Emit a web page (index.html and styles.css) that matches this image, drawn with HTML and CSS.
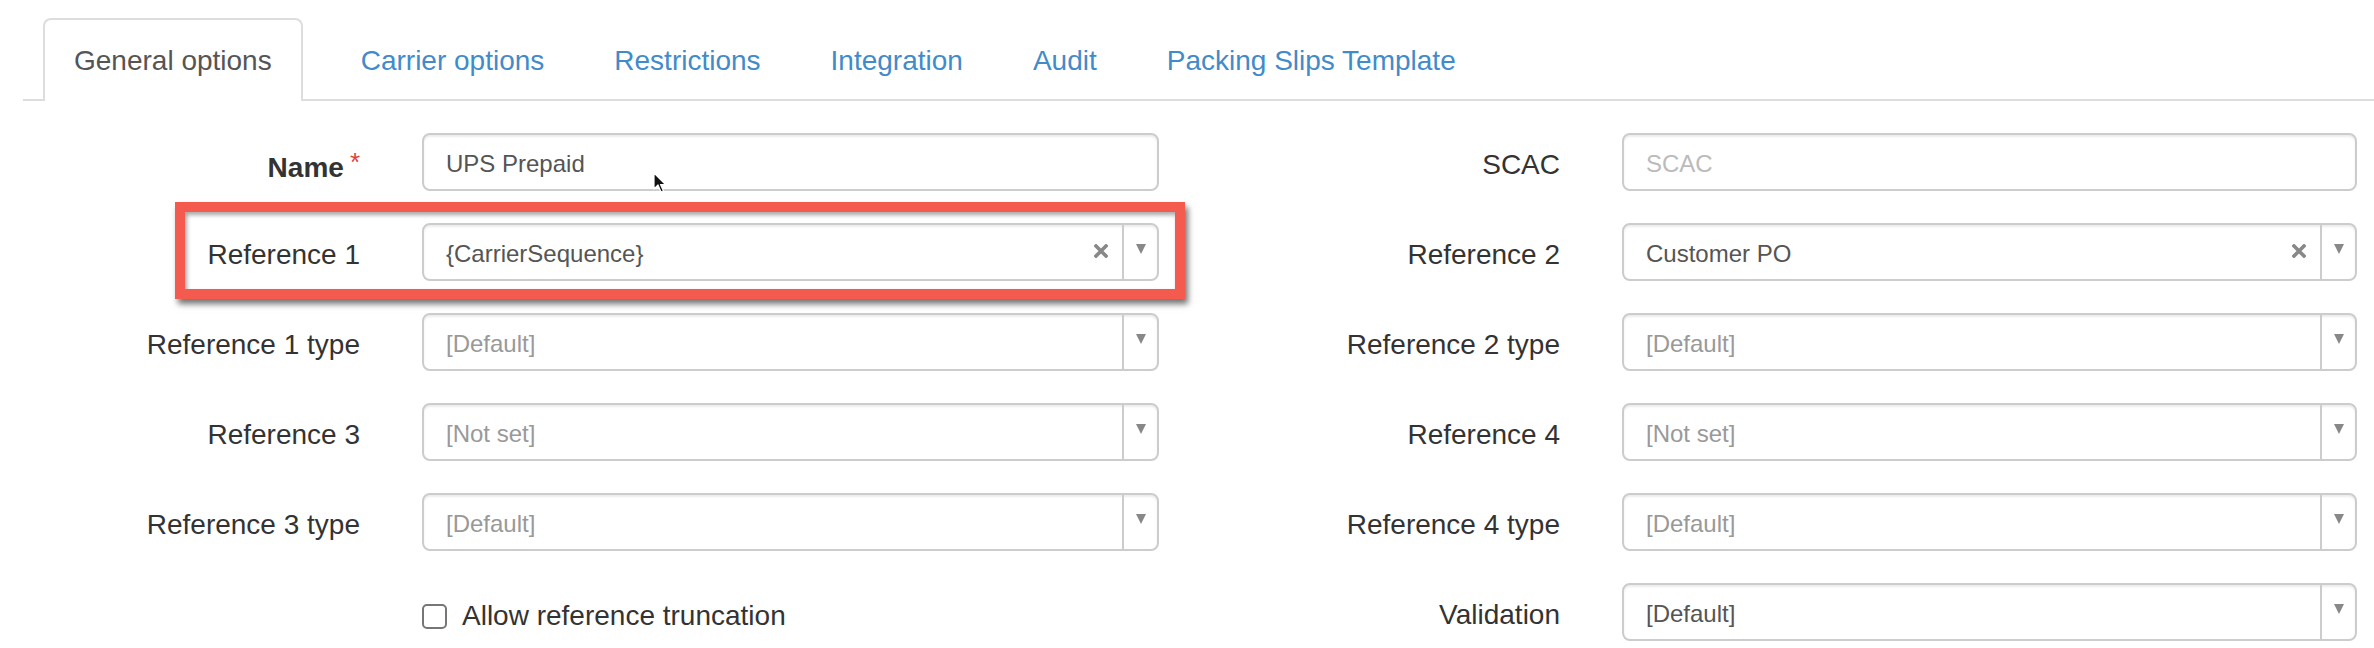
FILE: index.html
```html
<!DOCTYPE html>
<html>
<head>
<meta charset="utf-8">
<link rel="stylesheet" href="styles.css">
</head>
<body>
<div class="page">
  <ul class="tabs">
    <li class="tab active">General options</li>
    <li class="tab"><a href="#">Carrier options</a></li>
    <li class="tab"><a href="#">Restrictions</a></li>
    <li class="tab"><a href="#">Integration</a></li>
    <li class="tab"><a href="#">Audit</a></li>
    <li class="tab"><a href="#">Packing Slips Template</a></li>
  </ul>

  <div class="form">
    <label class="lbl bold">Name<span class="req">*</span></label>
    <div class="input"><span class="val">UPS Prepaid</span></div>
    <label class="lbl">SCAC</label>
    <div class="input"><span class="ph light">SCAC</span></div>

    <label class="lbl">Reference 1</label>
    <div class="select"><span class="val">{CarrierSequence}</span><span class="clear"><svg width="14" height="14" viewBox="0 0 14 14"><path d="M2 2L12 12M12 2L2 12" stroke="#888" stroke-width="3.6" stroke-linecap="square"/></svg></span><span class="arrow"><i></i></span></div>
    <label class="lbl">Reference 2</label>
    <div class="select"><span class="val">Customer PO</span><span class="clear"><svg width="14" height="14" viewBox="0 0 14 14"><path d="M2 2L12 12M12 2L2 12" stroke="#888" stroke-width="3.6" stroke-linecap="square"/></svg></span><span class="arrow"><i></i></span></div>

    <label class="lbl">Reference 1 type</label>
    <div class="select"><span class="ph">[Default]</span><span class="arrow"><i></i></span></div>
    <label class="lbl">Reference 2 type</label>
    <div class="select"><span class="ph">[Default]</span><span class="arrow"><i></i></span></div>

    <label class="lbl">Reference 3</label>
    <div class="select"><span class="ph">[Not set]</span><span class="arrow"><i></i></span></div>
    <label class="lbl">Reference 4</label>
    <div class="select"><span class="ph">[Not set]</span><span class="arrow"><i></i></span></div>

    <label class="lbl">Reference 3 type</label>
    <div class="select"><span class="ph">[Default]</span><span class="arrow"><i></i></span></div>
    <label class="lbl">Reference 4 type</label>
    <div class="select"><span class="ph">[Default]</span><span class="arrow"><i></i></span></div>

    <span class="lbl"></span>
    <label class="check"><span class="box"></span>Allow reference truncation</label>
    <label class="lbl">Validation</label>
    <div class="select"><span class="val">[Default]</span><span class="arrow"><i></i></span></div>
  </div>

  <div class="annotation"></div>
  <svg class="cursor" width="14" height="22" viewBox="0 0 14 22"><path d="M1 1L1 17L5 13L8 20L10.5 19L7.5 12.5L12.5 12.5Z" fill="#111" stroke="#fff" stroke-width="1.2" stroke-linejoin="round"/></svg>
</div>
</body>
</html>
```
FILE: styles.css
```css
* { box-sizing: border-box; }
html, body { margin: 0; padding: 0; background: #fff; }
body {
  font-family: "Liberation Sans", Arial, Helvetica, sans-serif;
  color: #333;
  width: 2374px;
  height: 648px;
  overflow: hidden;
}
.page { position: relative; padding-top: 18px; }

.tabs {
  list-style: none;
  margin: 0 0 0 23px;
  padding: 0 0 0 20px;
  display: flex;
  border-bottom: 2px solid #ddd;
  height: 83px;
}
.tab {
  font-size: 28px;
  line-height: 81px;
  padding: 0 32px;
  margin-right: 2px;
  border: 2px solid transparent;
  border-bottom: none;
}
.tab a { color: #428bca; text-decoration: none; }
.tab.active {
  color: #555;
  background: #fff;
  border-color: #ddd;
  border-radius: 8px 8px 0 0;
  height: 83px;
  margin-bottom: -2px;
  padding: 0 29px;
  margin-right: 24px;
}

.form {
  display: grid;
  grid-template-columns: 360px 737px 339px 735px;
  column-gap: 62px;
  grid-auto-rows: 58px;
  row-gap: 32px;
  margin-top: 32px;
}
.lbl {
  font-size: 28px;
  color: #333;
  text-align: right;
  align-self: center;
  padding-top: 6px;
}
.lbl.bold { font-weight: bold; }
.req { color: #e2413b; font-weight: normal; font-size: 26px; margin-left: 6px; vertical-align: 6px; }

.input, .select {
  border: 2px solid #ccc;
  border-radius: 8px;
  box-shadow: inset 0 2px 2px rgba(0,0,0,.075);
  display: flex;
  align-items: center;
  font-size: 24px;
  background: #fff;
}
.input { padding-left: 22px; }
.select { padding-left: 22px; }
.val { color: #555; flex: 1; padding-top: 4px; }
.ph { color: #999; flex: 1; padding-top: 4px; }
.ph.light { color: #bbb; }
.clear { width: 42px; display: flex; justify-content: center; align-items: center; margin-top: -2px; }
.arrow {
  width: 35px;
  align-self: stretch;
  border-left: 2px solid #ccc;
  display: flex;
  justify-content: center;
  align-items: center;
}
.arrow i {
  display: block;
  width: 0; height: 0;
  border-left: 5px solid transparent;
  border-right: 5px solid transparent;
  border-top: 10px solid #888;
  margin-top: -6px;
}

.check {
  display: flex;
  align-items: center;
  font-size: 28px;
  color: #333;
  padding-top: 8px;
}
.check .box {
  width: 25px; height: 25px;
  border: 2px solid #767676;
  border-radius: 5px;
  margin-right: 15px;
  background: #fff;
}

.annotation {
  position: absolute;
  left: 175px; top: 202px;
  width: 1010px; height: 97px;
  border: 10px solid #f55a4e;
  box-shadow: 3px 5px 6px rgba(0,0,0,.55), inset 2px 3px 4px rgba(0,0,0,.35);
  pointer-events: none;
}
.cursor { position: absolute; left: 653px; top: 172px; }
```
